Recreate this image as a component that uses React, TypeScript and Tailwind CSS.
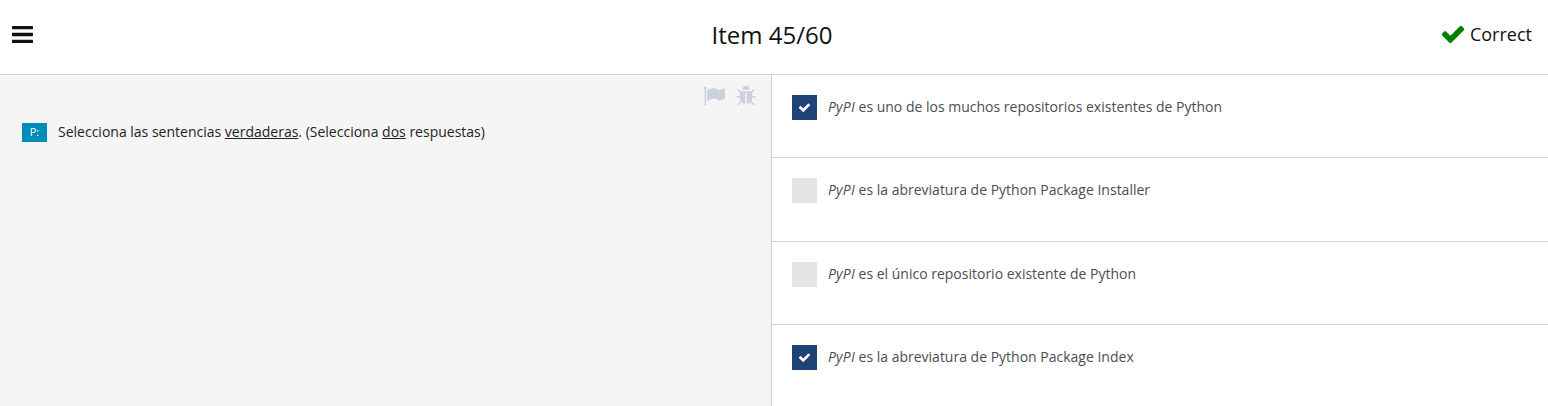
type IconProps = { path: string; className: string };

const CHECK =
  "M1671 566q0 40-28 68l-724 724-136 136q-28 28-68 28t-68-28l-136-136-362-362q-28-28-28-68t28-68l136-136q28-28 68-28t68 28l294 295 656-657q28-28 68-28t68 28l136 136q28 28 28 68z";
const FLAG =
  "M320 256q0 72-64 110v1266q0 13-9.5 22.5t-22.5 9.5h-64q-13 0-22.5-9.5t-9.5-22.5v-1266q-64-38-64-110 0-53 37.5-90.5t90.5-37.5 90.5 37.5 37.5 90.5zm1472 64v763q0 25-12.5 38.5t-39.5 27.5q-215 116-369 116-61 0-123.5-22t-108.5-48-115.5-48-142.5-22q-192 0-464 146-17 9-33 9-26 0-45-19t-19-45v-742q0-32 31-55 21-14 79-43 236-120 421-120 107 0 200 29t219 88q38 19 88 19 54 0 117.5-21t110-47 88-47 54.5-21q26 0 45 19t19 45z";
const BUG =
  "M1696 960q0 26-19 45t-45 19h-224q0 171-67 290l208 209q19 19 19 45t-19 45q-18 19-45 19t-45-19l-198-197q-5 5-15 13t-42 28.5-65 36.5-82 29-97 13v-896h-128v896q-51 0-101.5-13.5t-87-33-66-39-43.5-32.5l-15-14-183 207q-20 21-48 21-24 0-43-16-19-18-20.5-44.5t15.5-46.5l202-227q-58-114-58-274h-224q-26 0-45-19t-19-45 19-45 45-19h224v-294l-173-173q-19-19-19-45t19-45 45-19 45 19l173 173h844l173-173q19-19 45-19t45 19 19 45-19 45l-173 173v294h224q26 0 45 19t19 45zm-480-576h-640q0-133 93.5-226.5t226.5-93.5 226.5 93.5 93.5 226.5z";

function Icon({ path, className }: IconProps) {
  return (
    <svg viewBox="0 0 1792 1792" fill="currentColor" aria-hidden="true" className={className}>
      <path d={path} />
    </svg>
  );
}

function MenuIcon() {
  return (
    <svg viewBox="0 0 21 18" fill="currentColor" aria-hidden="true" className="h-[18px] w-[21px]">
      <rect x="0" y="0" width="21" height="3.2" rx="0.6" />
      <rect x="0" y="6.8" width="21" height="3.4" rx="0.6" />
      <rect x="0" y="13.7" width="21" height="3.4" rx="0.6" />
    </svg>
  );
}

const answers = [
  { text: " es uno de los muchos repositorios existentes de Python", checked: true, size: "h-[83px]" },
  { text: " es la abreviatura de Python Package Installer", checked: false, size: "h-[84px]" },
  { text: " es el único repositorio existente de Python", checked: false, size: "h-[83px]" },
  { text: " es la abreviatura de Python Package Index", checked: true, size: "h-[84px]" },
];

export default function App() {
  return (
    <div className="flex h-[406px] flex-col overflow-hidden bg-white font-['Open_Sans',sans-serif]">
      <header className="grid h-[75px] shrink-0 grid-cols-3 items-center border-b border-[#d3d3d3] pr-4 pb-1 pl-3 text-[#111]">
        <MenuIcon />
        <h1 className="text-center text-2xl">Item 45/60</h1>
        <div className="mb-[3px] flex items-center justify-end gap-1 text-lg">
          <Icon path={CHECK} className="mt-px size-[26px] text-[#008000]" />
          <span>Correct</span>
        </div>
      </header>
      <main className="flex min-h-0 flex-1">
        <section className="w-[772px] border-r border-[#cfcfcf] bg-[#f5f5f5]">
          <div className="flex justify-end gap-[9.5px] pt-2.5 pr-[14.3px] text-[#cbd1de]">
            <Icon path={FLAG} className="size-[22px]" />
            <Icon path={BUG} className="size-[22px]" />
          </div>
          <div className="flex items-center pt-[15px] pl-[22px] text-sm text-[#222]">
            <span className="mr-[11px] flex h-[19px] w-[25px] items-center justify-center bg-[#008cba] text-[11px] text-white">P:</span>
            <p>Selecciona las sentencias <u>verdaderas</u>. (Selecciona <u>dos</u> respuestas)</p>
          </div>
        </section>
        <section className="flex-1">
          {answers.map((a) => (
            <div key={a.text} className={`flex items-start border-b border-[#d3d3d3] pt-5 pl-5 ${a.size}`}>
              <span className={`mr-[11px] flex size-[25px] items-center justify-center ${a.checked ? "bg-[#1f4277]" : "bg-[#e4e4e4]"}`}>
                {a.checked && <Icon path={CHECK} className="size-[13px] text-white" />}
              </span>
              <p className="text-sm leading-6 text-[#4d4d4d]"><i className="tracking-[0.2px]">PyPI</i>{a.text}</p>
            </div>
          ))}
        </section>
      </main>
    </div>
  );
}
